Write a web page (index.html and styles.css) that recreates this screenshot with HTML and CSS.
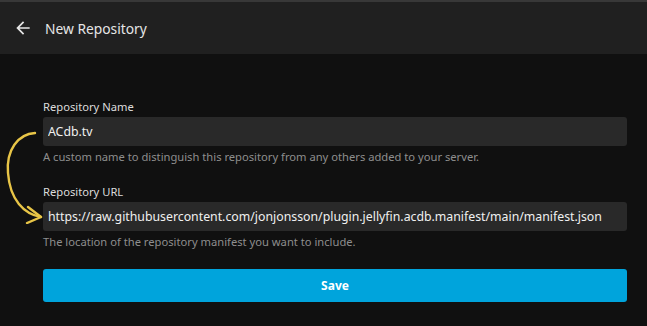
FILE: index.html
```html
<!DOCTYPE html>
<html lang="en">
<head>
    <meta charset="UTF-8">
    <meta name="viewport" content="width=device-width, initial-scale=1.0">
    <title>New Repository</title>
    <link rel="stylesheet" href="styles.css">
</head>
<body>
    <header class="header">
        <button class="back-btn" type="button" aria-label="Back">
            <svg width="20" height="20" viewBox="0 0 24 24"><path d="M20 11H7.83l5.59-5.59L12 4l-8 8 8 8 1.41-1.41L7.83 13H20v-2z" fill="#e6e6e6"/></svg>
        </button>
        <h1>New Repository</h1>
    </header>

    <main class="container">
        <form class="repo-form">
            <div class="form-group">
                <label for="repoName">Repository Name</label>
                <input type="text" id="repoName" value="ACdb.tv">
                <div class="hint">A custom name to distinguish this repository from any others added to your server.</div>
            </div>

            <div class="form-group">
                <label for="repoUrl">Repository URL</label>
                <input type="text" id="repoUrl" value="https://raw.githubusercontent.com/jonjonsson/plugin.jellyfin.acdb.manifest/main/manifest.json">
                <div class="hint">The location of the repository manifest you want to include.</div>
            </div>

            <button type="submit" class="save-btn">Save</button>
        </form>

        <!-- hand-drawn annotation -->
        <svg class="annotation" width="50" height="104" viewBox="0 0 50 104">
            <path d="M35 13 C 18 14, 6 30, 8 53 C 10 80, 24 94, 41 97" fill="none" stroke="#e8c547" stroke-width="2.4" stroke-linecap="round"/>
            <path d="M28 87 L41 97 L27 103" fill="none" stroke="#e8c547" stroke-width="2.4" stroke-linecap="round" stroke-linejoin="round"/>
        </svg>
    </main>
</body>
</html>
```

FILE: styles.css
```css
* {
    margin: 0;
    padding: 0;
    box-sizing: border-box;
}

body {
    font-family: "Noto Sans", sans-serif;
    background: #101010;
    color: #e6e6e6;
    min-height: 100vh;
}

.header {
    display: flex;
    align-items: center;
    height: 54px;
    background: #202020;
    border-top: 2px solid #383838;
    padding-left: 13px;
}

.back-btn {
    display: flex;
    align-items: center;
    justify-content: center;
    background: none;
    border: none;
    width: 20px;
    height: 20px;
    margin-right: 12px;
    cursor: pointer;
}

.header h1 {
    font-size: 13.8px;
    font-weight: 400;
    color: #e6e6e6;
}

.container {
    position: relative;
    padding: 45px 20px 0 43px;
}

.form-group {
    margin-bottom: 20px;
}

label {
    display: block;
    font-size: 11.2px;
    color: #dcdcdc;
    margin-bottom: 3px;
}

input[type="text"] {
    width: 584px;
    height: 29px;
    padding: 0 5px;
    background: #292929;
    border: none;
    border-radius: 3px;
    color: #f0f0f0;
    font-family: inherit;
    font-size: 12.3px;
    outline: none;
}

.hint {
    font-size: 11.2px;
    color: #8e8e8e;
    margin-top: 3px;
}

.save-btn {
    display: block;
    width: 584px;
    height: 33px;
    margin-top: 24px;
    background: #00a4dc;
    color: #fff;
    border: none;
    border-radius: 3px;
    font-family: inherit;
    font-size: 12px;
    font-weight: 700;
    cursor: pointer;
}

.form-group + .save-btn {
    margin-top: 4px;
}

.annotation {
    position: absolute;
    left: 0;
    top: 66px;
}
```
